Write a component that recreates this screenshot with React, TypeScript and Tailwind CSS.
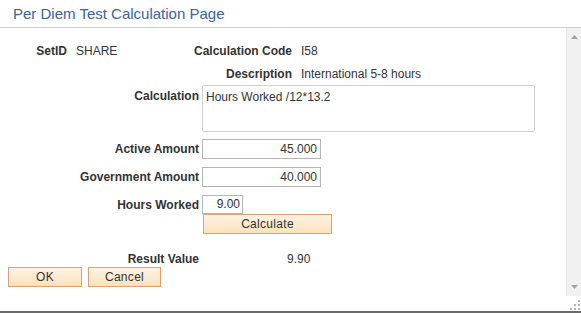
import React from 'react'

const btn =
  'h-[20px] border border-[#e0a26b] bg-gradient-to-b from-[#fdf3e3] to-[#fbe2bd] text-[12px] tracking-[0.3px] leading-[18px] text-[#333] text-center'

export default function App() {
  return (
    <div className="w-[581px] h-[313px] flex flex-col bg-white text-[12px] text-[#333] font-['Liberation_Sans',Arial,sans-serif] border-b-2 border-[#6b6b6b]">
      {/* Header */}
      <div className="h-[28px] shrink-0 border-b border-[#cfcfcf] pl-[13px] pt-[5px]">
        <h1 className="text-[15px] leading-[18px] text-[#3a64a0]">Per Diem Test Calculation Page</h1>
      </div>

      <div className="flex flex-1 min-h-0">
        {/* Content */}
        <div className="flex-1 pt-[16px]">
          <div className="flex h-[15px] leading-[15px] whitespace-nowrap">
            <span className="w-[67px] text-right font-bold">SetID</span>
            <span className="w-[121px] pl-[9px]">SHARE</span>
            <span className="w-[104px] text-right font-bold">Calculation Code</span>
            <span className="pl-[9px]">I58</span>
          </div>

          <div className="flex h-[15px] leading-[15px] mt-[8px] whitespace-nowrap">
            <span className="w-[188px]" />
            <span className="w-[104px] text-right font-bold">Description</span>
            <span className="pl-[9px]">International 5-8 hours</span>
          </div>

          <div className="flex mt-[3px]">
            <span className="w-[199px] text-right font-bold leading-[15px] pt-[4px]">Calculation</span>
            <div className="ml-[3px] w-[333px] h-[47px] border border-[#d0d0d0] rounded-[2px] px-[3px] pt-[4px] leading-[15px]">
              Hours Worked /12*13.2
            </div>
          </div>

          <div className="flex items-center mt-[7px] h-[20px]">
            <span className="w-[199px] text-right font-bold">Active Amount</span>
            <div className="ml-[3px] w-[119px] h-[20px] border border-[#b5b5b5] text-right pr-[3px] leading-[18px]">45.000</div>
          </div>

          <div className="flex items-center mt-[8px] h-[20px]">
            <span className="w-[199px] text-right font-bold">Government Amount</span>
            <div className="ml-[3px] w-[119px] h-[20px] border border-[#b5b5b5] text-right pr-[3px] leading-[18px]">40.000</div>
          </div>

          <div className="flex items-center mt-[8px] h-[19px]">
            <span className="w-[199px] text-right font-bold">Hours Worked</span>
            <div className="ml-[3px] w-[41px] h-[19px] border border-[#b5b5b5] text-right pr-[2px] leading-[17px]">9.00</div>
          </div>

          <div className="flex">
            <button className={`${btn} ml-[203px] w-[129px]`}>Calculate</button>
          </div>

          <div className="flex h-[15px] leading-[15px] mt-[18px]">
            <span className="w-[199px] text-right font-bold">Result Value</span>
            <span className="ml-[88px]">9.90</span>
          </div>

          <div className="flex gap-[6px] pl-[8px]">
            <button className={`${btn} w-[74px]`}>OK</button>
            <button className={`${btn} w-[73px]`}>Cancel</button>
          </div>
        </div>

        {/* Scrollbar */}
        <div className="w-[15px] flex flex-col">
          <div className="flex-1 flex flex-col items-center justify-between bg-[#f1f1f1] border-l border-[#e8e8e8] py-[7px]">
            <svg width="7" height="4" viewBox="0 0 7 4">
              <path d="M3.5 0 L7 4 L0 4 Z" fill="#a3a3a3" />
            </svg>
            <svg width="7" height="4" viewBox="0 0 7 4">
              <path d="M0 0 L7 0 L3.5 4 Z" fill="#a3a3a3" />
            </svg>
          </div>
          <div className="h-[15px] relative">
            <svg width="15" height="15" viewBox="0 0 15 15" className="absolute inset-0">
              <rect x="12" y="4" width="2" height="2" fill="#b5b5b5" />
              <rect x="8" y="8" width="2" height="2" fill="#b5b5b5" />
              <rect x="12" y="8" width="2" height="2" fill="#b5b5b5" />
              <rect x="4" y="12" width="2" height="2" fill="#b5b5b5" />
              <rect x="8" y="12" width="2" height="2" fill="#b5b5b5" />
              <rect x="12" y="12" width="2" height="2" fill="#b5b5b5" />
            </svg>
          </div>
        </div>
      </div>
    </div>
  )
}
